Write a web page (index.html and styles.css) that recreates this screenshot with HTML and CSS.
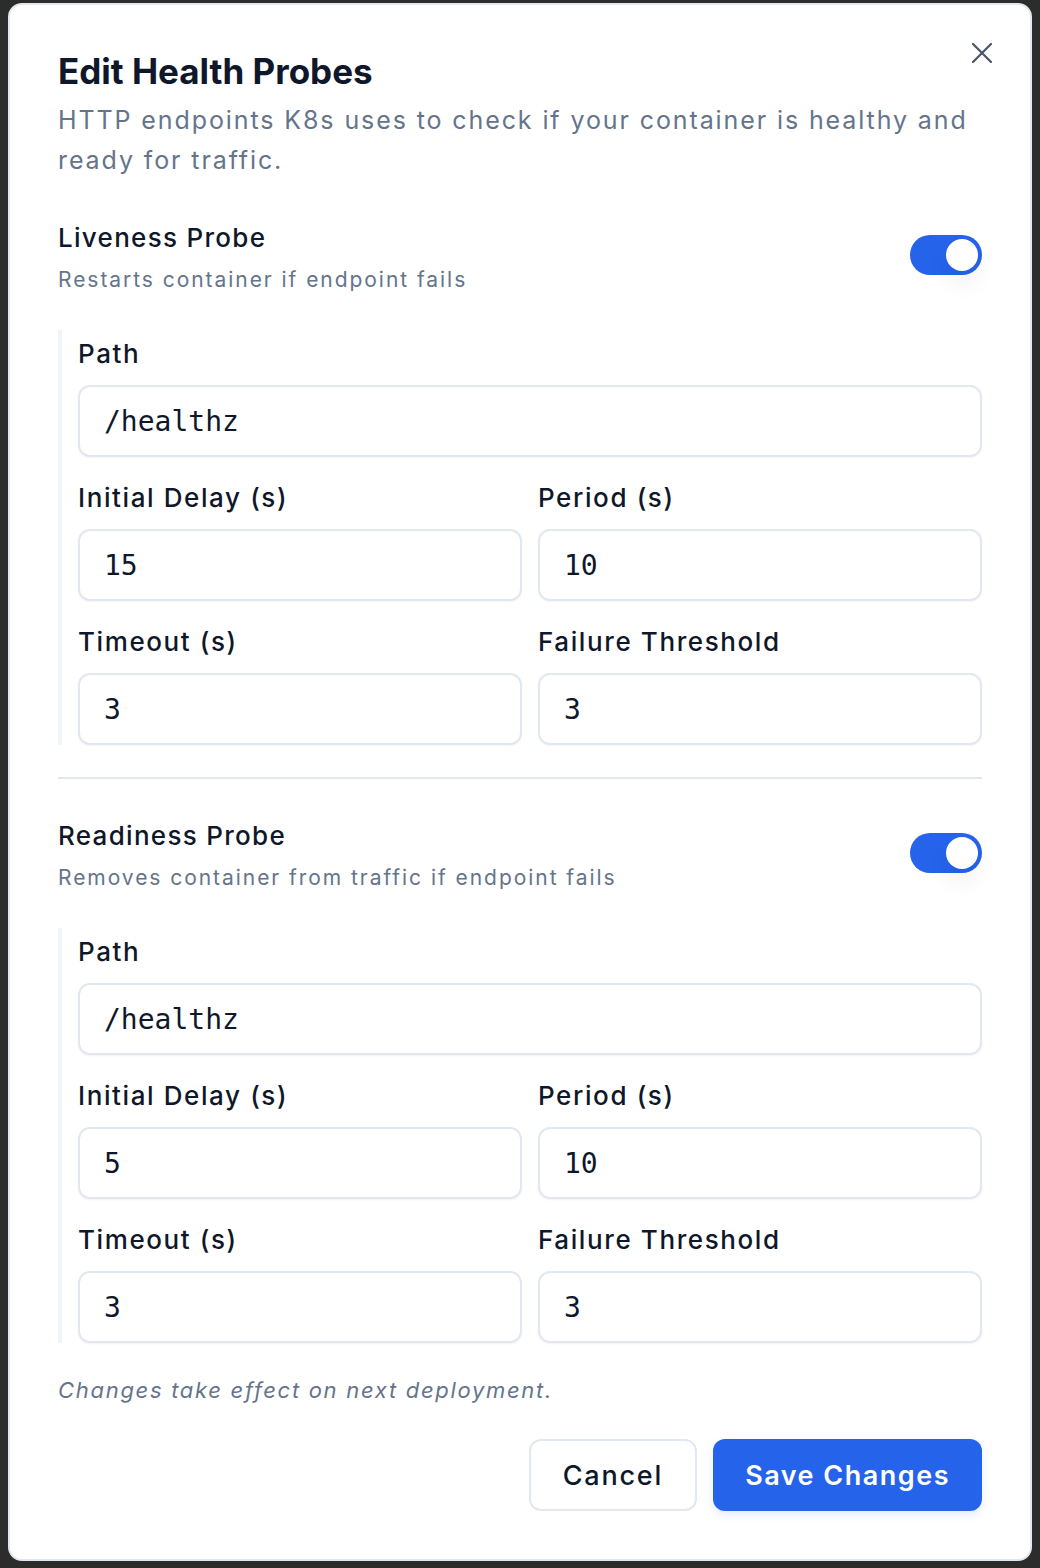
FILE: index.html
```html
<!DOCTYPE html>
<html lang="en">
<head>
<meta charset="utf-8">
<title>Edit Health Probes</title>
<link rel="stylesheet" href="styles.css">
</head>
<body>
<div class="modal">
  <button class="close" aria-label="Close">
    <svg viewBox="0 0 20 20" width="20" height="20"><path d="M1 1 L19 19 M19 1 L1 19" stroke="#475569" stroke-width="2.2" stroke-linecap="round" fill="none"/></svg>
  </button>
  <h1 class="title">Edit Health Probes</h1>
  <p class="subtitle">HTTP endpoints K8s uses to check if your container is healthy and ready for traffic.</p>

  <section class="probe">
    <div class="probe-head">
      <div>
        <h2 class="probe-title">Liveness Probe</h2>
        <p class="probe-desc">Restarts container if endpoint fails</p>
      </div>
      <span class="toggle"><span class="knob"></span></span>
    </div>
    <div class="fields">
      <div class="field">
        <label class="label">Path</label>
        <div class="input">/healthz</div>
      </div>
      <div class="grid">
        <div class="field">
          <label class="label">Initial Delay (s)</label>
          <div class="input">15</div>
        </div>
        <div class="field">
          <label class="label">Period (s)</label>
          <div class="input">10</div>
        </div>
        <div class="field">
          <label class="label">Timeout (s)</label>
          <div class="input">3</div>
        </div>
        <div class="field">
          <label class="label">Failure Threshold</label>
          <div class="input">3</div>
        </div>
      </div>
    </div>
  </section>

  <hr class="divider">

  <section class="probe">
    <div class="probe-head">
      <div>
        <h2 class="probe-title">Readiness Probe</h2>
        <p class="probe-desc">Removes container from traffic if endpoint fails</p>
      </div>
      <span class="toggle"><span class="knob"></span></span>
    </div>
    <div class="fields">
      <div class="field">
        <label class="label">Path</label>
        <div class="input">/healthz</div>
      </div>
      <div class="grid">
        <div class="field">
          <label class="label">Initial Delay (s)</label>
          <div class="input">5</div>
        </div>
        <div class="field">
          <label class="label">Period (s)</label>
          <div class="input">10</div>
        </div>
        <div class="field">
          <label class="label">Timeout (s)</label>
          <div class="input">3</div>
        </div>
        <div class="field">
          <label class="label">Failure Threshold</label>
          <div class="input">3</div>
        </div>
      </div>
    </div>
  </section>

  <p class="note">Changes take effect on next deployment.</p>

  <div class="actions">
    <button class="btn btn-cancel">Cancel</button>
    <button class="btn btn-save">Save Changes</button>
  </div>
</div>
</body>
</html>
```
FILE: styles.css
```css
* { box-sizing: border-box; }

html, body {
  margin: 0;
  padding: 0;
  background: #2c2c2c;
}

body {
  font-family: Inter, "Open Sans", sans-serif;
  color: #0f172a;
  padding: 3px 0 0 8px;
  height: 1568px;
  overflow: hidden;
}

.modal {
  position: relative;
  width: 1024px;
  background: #ffffff;
  border: 2px solid #e2e8f0;
  border-radius: 14px;
  padding: 48px;
}

.close {
  position: absolute;
  top: 38px;
  right: 38px;
  width: 20px;
  height: 20px;
  padding: 0;
  border: 0;
  background: none;
  display: flex;
}

.title {
  margin: 0 0 11px;
  font-size: 35px;
  line-height: 36px;
  font-weight: 700;
  letter-spacing: 0;
  color: #0f172a;
}

.subtitle {
  margin: 0;
  font-size: 25px;
  line-height: 40px;
  color: #64748b;
  letter-spacing: 1.9px;
  width: 924px;
}

.probe { margin-top: 40px; }
.divider + .probe { margin-top: 39px; }

.probe-head {
  display: flex;
  align-items: center;
  justify-content: space-between;
}

.probe-title {
  margin: 0;
  font-size: 26px;
  line-height: 36px;
  font-weight: 500;
  letter-spacing: 1.3px;
  color: #0f172a;
}

.probe-desc {
  margin: 8px 0 0;
  font-size: 21px;
  line-height: 32px;
  letter-spacing: 1.95px;
  color: #64748b;
}

.toggle {
  width: 72px;
  height: 40px;
  border-radius: 20px;
  background: #2563eb;
  display: flex;
  align-items: center;
  justify-content: flex-end;
  padding: 0 4px;
  margin-top: -6px;
}

.knob {
  width: 32px;
  height: 32px;
  border-radius: 50%;
  background: #ffffff;
  box-shadow: 0 14px 22px rgba(15, 23, 42, 0.06);
}

.fields {
  margin-top: 34px;
  border-left: 4px solid #f1f5f9;
  padding: 5px 0 0 16px;
}

.grid {
  display: grid;
  grid-template-columns: 1fr 1fr;
  column-gap: 16px;
}

.field { margin-top: 22px; }
.fields > .field:first-child { margin-top: 0; }

.label {
  display: block;
  font-size: 26px;
  line-height: 38px;
  font-weight: 500;
  letter-spacing: 1.6px;
  color: #0f172a;
  margin-bottom: 12px;
}

.input {
  height: 72px;
  border: 2px solid #e2e8f0;
  border-radius: 12px;
  background: #ffffff;
  box-shadow: 0 1px 2px rgba(15, 23, 42, 0.05);
  padding: 0 24px;
  display: flex;
  align-items: center;
  font-family: "DejaVu Sans Mono", "Liberation Mono", monospace;
  font-size: 28px;
  color: #0f172a;
}

.divider {
  margin: 32px 0 0;
  border: 0;
  height: 2px;
  background: #e2e8f0;
}

.note {
  margin: 31px 0 0;
  font-size: 22px;
  line-height: 32px;
  font-style: italic;
  letter-spacing: 1.7px;
  color: #64748b;
}

.actions {
  margin-top: 33px;
  display: flex;
  justify-content: flex-end;
  gap: 16px;
}

.btn {
  height: 72px;
  border-radius: 12px;
  font-family: Inter, "Open Sans", sans-serif;
  font-size: 27px;
  padding: 0 32px;
}

.btn-cancel {
  background: #ffffff;
  border: 2px solid #e2e8f0;
  color: #0f172a;
  font-weight: 500;
  letter-spacing: 1.8px;
}

.btn-save {
  background: #2563eb;
  border: 0;
  color: #ffffff;
  font-weight: 600;
  letter-spacing: 1.5px;
  box-shadow: 0 4px 8px rgba(37, 99, 235, 0.12);
}
```
